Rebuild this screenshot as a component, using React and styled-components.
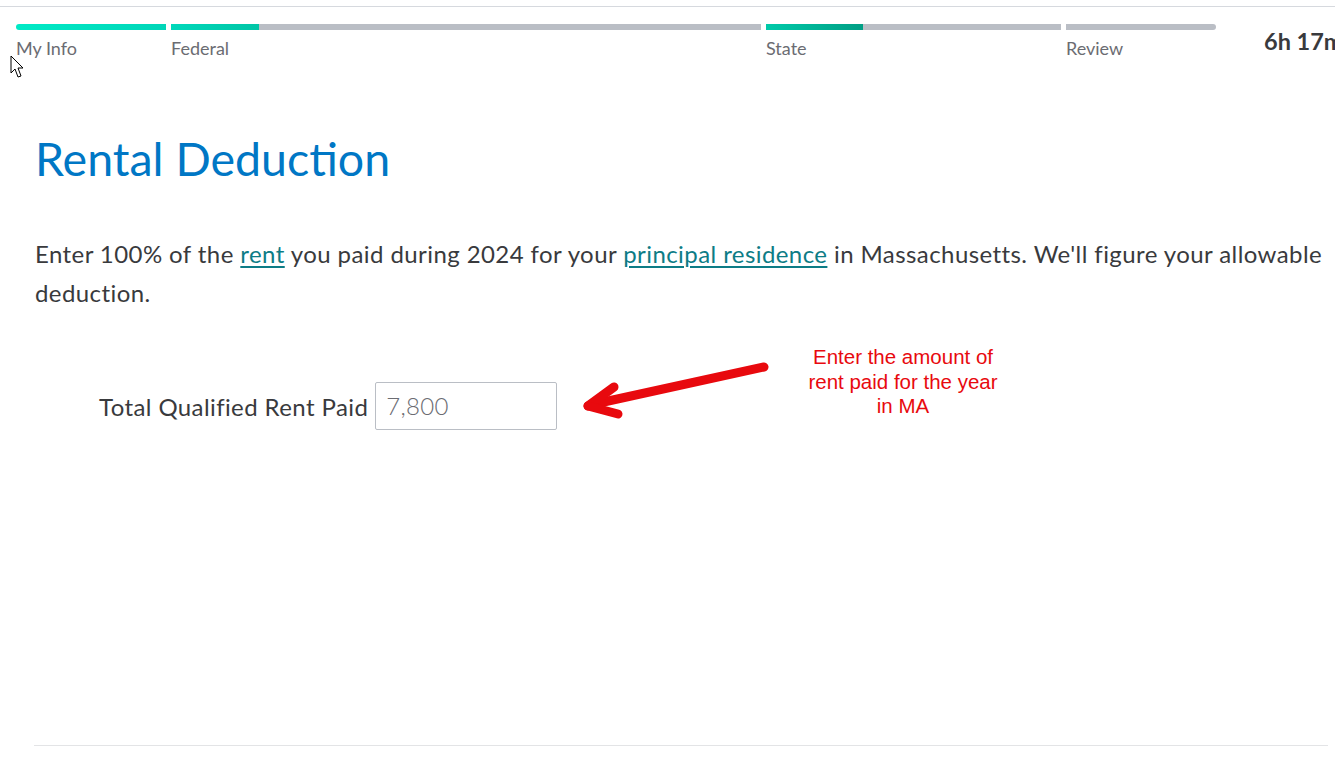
import React from 'react';
import styled, { createGlobalStyle } from 'styled-components';

const Global = createGlobalStyle`
  html, body { margin: 0; padding: 0; background: #fff; overflow: hidden; }
  body { font-family: Lato, "Open Sans", sans-serif; }
`;

const Page = styled.div`
  position: relative;
  width: 1335px;
  height: 757px;
  display: flex;
  flex-direction: column;
  overflow: hidden;
`;

const Header = styled.header`
  margin-top: 6px;
  border-top: 1px solid #d6d9de;
  padding: 17px 0 0 16px;
  display: flex;
  align-items: flex-start;
  white-space: nowrap;
`;

const Steps = styled.div`
  display: flex;
  gap: 5px;
`;

const Step = styled.div`
  width: ${p => p.$w}px;
  display: flex;
  flex-direction: column;
`;

const Bar = styled.div`
  height: 6px;
  background: #babec5;
  border-radius: ${p => p.$radius};
  overflow: hidden;
`;

const Fill = styled.div`
  height: 100%;
  background: linear-gradient(90deg, ${p => p.$from}, ${p => p.$to});
`;

const StepLabel = styled.span`
  margin-top: 8px;
  font-size: 18px;
  color: #6b6c72;
  line-height: 21px;
`;

const Timer = styled.div`
  margin-left: 48px;
  margin-top: 3px;
  font-size: 23.5px;
  font-weight: 700;
  color: #393a3d;
`;

const Main = styled.main`
  flex: 1;
  padding: 0 0 0 35px;
`;

const Title = styled.h1`
  margin: 71px 0 0;
  font-size: 46.5px;
  font-weight: 400;
  line-height: 56px;
  color: #0077c5;
`;

const Intro = styled.p`
  margin: 48px 0 0;
  font-size: 24px;
  letter-spacing: 0.42px;
  line-height: 39px;
  color: #393a3d;
  max-width: 1295px;
`;

const Link = styled.a`
  color: #0d7c86;
  text-decoration: underline;
  text-underline-offset: 3px;
  text-decoration-thickness: 2px;
`;

const FormRow = styled.div`
  position: relative;
  margin: 70px 0 0 64px;
  display: flex;
  align-items: center;
  gap: 7px;
`;

const FieldLabel = styled.label`
  font-size: 24px;
  letter-spacing: 0.4px;
  color: #393a3d;
`;

const Input = styled.div`
  box-sizing: border-box;
  width: 182px;
  height: 48px;
  border: 1px solid #babec5;
  border-radius: 2px;
  padding: 8px 10px 0;
  font-size: 24px;
  letter-spacing: 0.3px;
  font-weight: 300;
  color: #6b6c72;
`;

const Callout = styled.div`
  position: absolute;
  left: 479px;
  top: -37px;
  display: flex;
  align-items: flex-start;
  gap: 31px;
`;

const Note = styled.div`
  width: 196px;
  text-align: center;
  font-family: "Liberation Sans", Arial, sans-serif;
  font-size: 20.5px;
  line-height: 24.5px;
  color: #e8090e;
`;

const Rule = styled.hr`
  margin: 0 7px 11px 34px;
  border: none;
  border-top: 1px solid #e3e4e6;
`;

const Cursor = styled.svg`
  position: absolute;
  left: 10px;
  top: 55px;
`;

const steps = [
  { label: 'My Info', w: 150, fill: '100%', from: '#00eac6', to: '#00d6b8', radius: '3px 0 0 3px' },
  { label: 'Federal', w: 590, fill: '88px', from: '#00d8ba', to: '#00c5a6', radius: '0' },
  { label: 'State', w: 295, fill: '97px', from: '#00caa9', to: '#009e84', radius: '0' },
  { label: 'Review', w: 150, fill: '0px', from: '#babec5', to: '#babec5', radius: '0 3px 3px 0' },
];

export default function App() {
  return (
    <Page>
      <Global />
      <Header>
        <Steps>
          {steps.map(s => (
            <Step key={s.label} $w={s.w}>
              <Bar $radius={s.radius}>
                <Fill $from={s.from} $to={s.to} style={{ width: s.fill }} />
              </Bar>
              <StepLabel>{s.label}</StepLabel>
            </Step>
          ))}
        </Steps>
        <Timer>6h 17m</Timer>
      </Header>
      <Main>
        <Title>Rental Deduction</Title>
        <Intro>
          Enter 100% of the <Link href="#">rent</Link> you paid during 2024 for your{' '}
          <Link href="#">principal residence</Link> in Massachusetts. We'll figure your allowable deduction.
        </Intro>
        <FormRow>
          <FieldLabel>Total Qualified Rent Paid</FieldLabel>
          <Input>7,800</Input>
          <Callout>
            <svg width="196" height="80" viewBox="0 0 196 80">
              <g stroke="#e8090e" strokeWidth="9" strokeLinecap="round" fill="none">
                <line x1="186" y1="22" x2="12" y2="60" />
                <line x1="10" y1="61" x2="36" y2="42" />
                <line x1="10" y1="61" x2="40" y2="69" />
              </g>
            </svg>
            <Note>Enter the amount of rent paid for the year in MA</Note>
          </Callout>
        </FormRow>
      </Main>
      <Rule />
      <Cursor width="14" height="24" viewBox="0 0 14 24">
        <path d="M1 1 L1 18 L5 14 L8 22 L11 21 L8 13 L13 13 Z" fill="#fff" stroke="#000" strokeWidth="1" />
      </Cursor>
    </Page>
  );
}
